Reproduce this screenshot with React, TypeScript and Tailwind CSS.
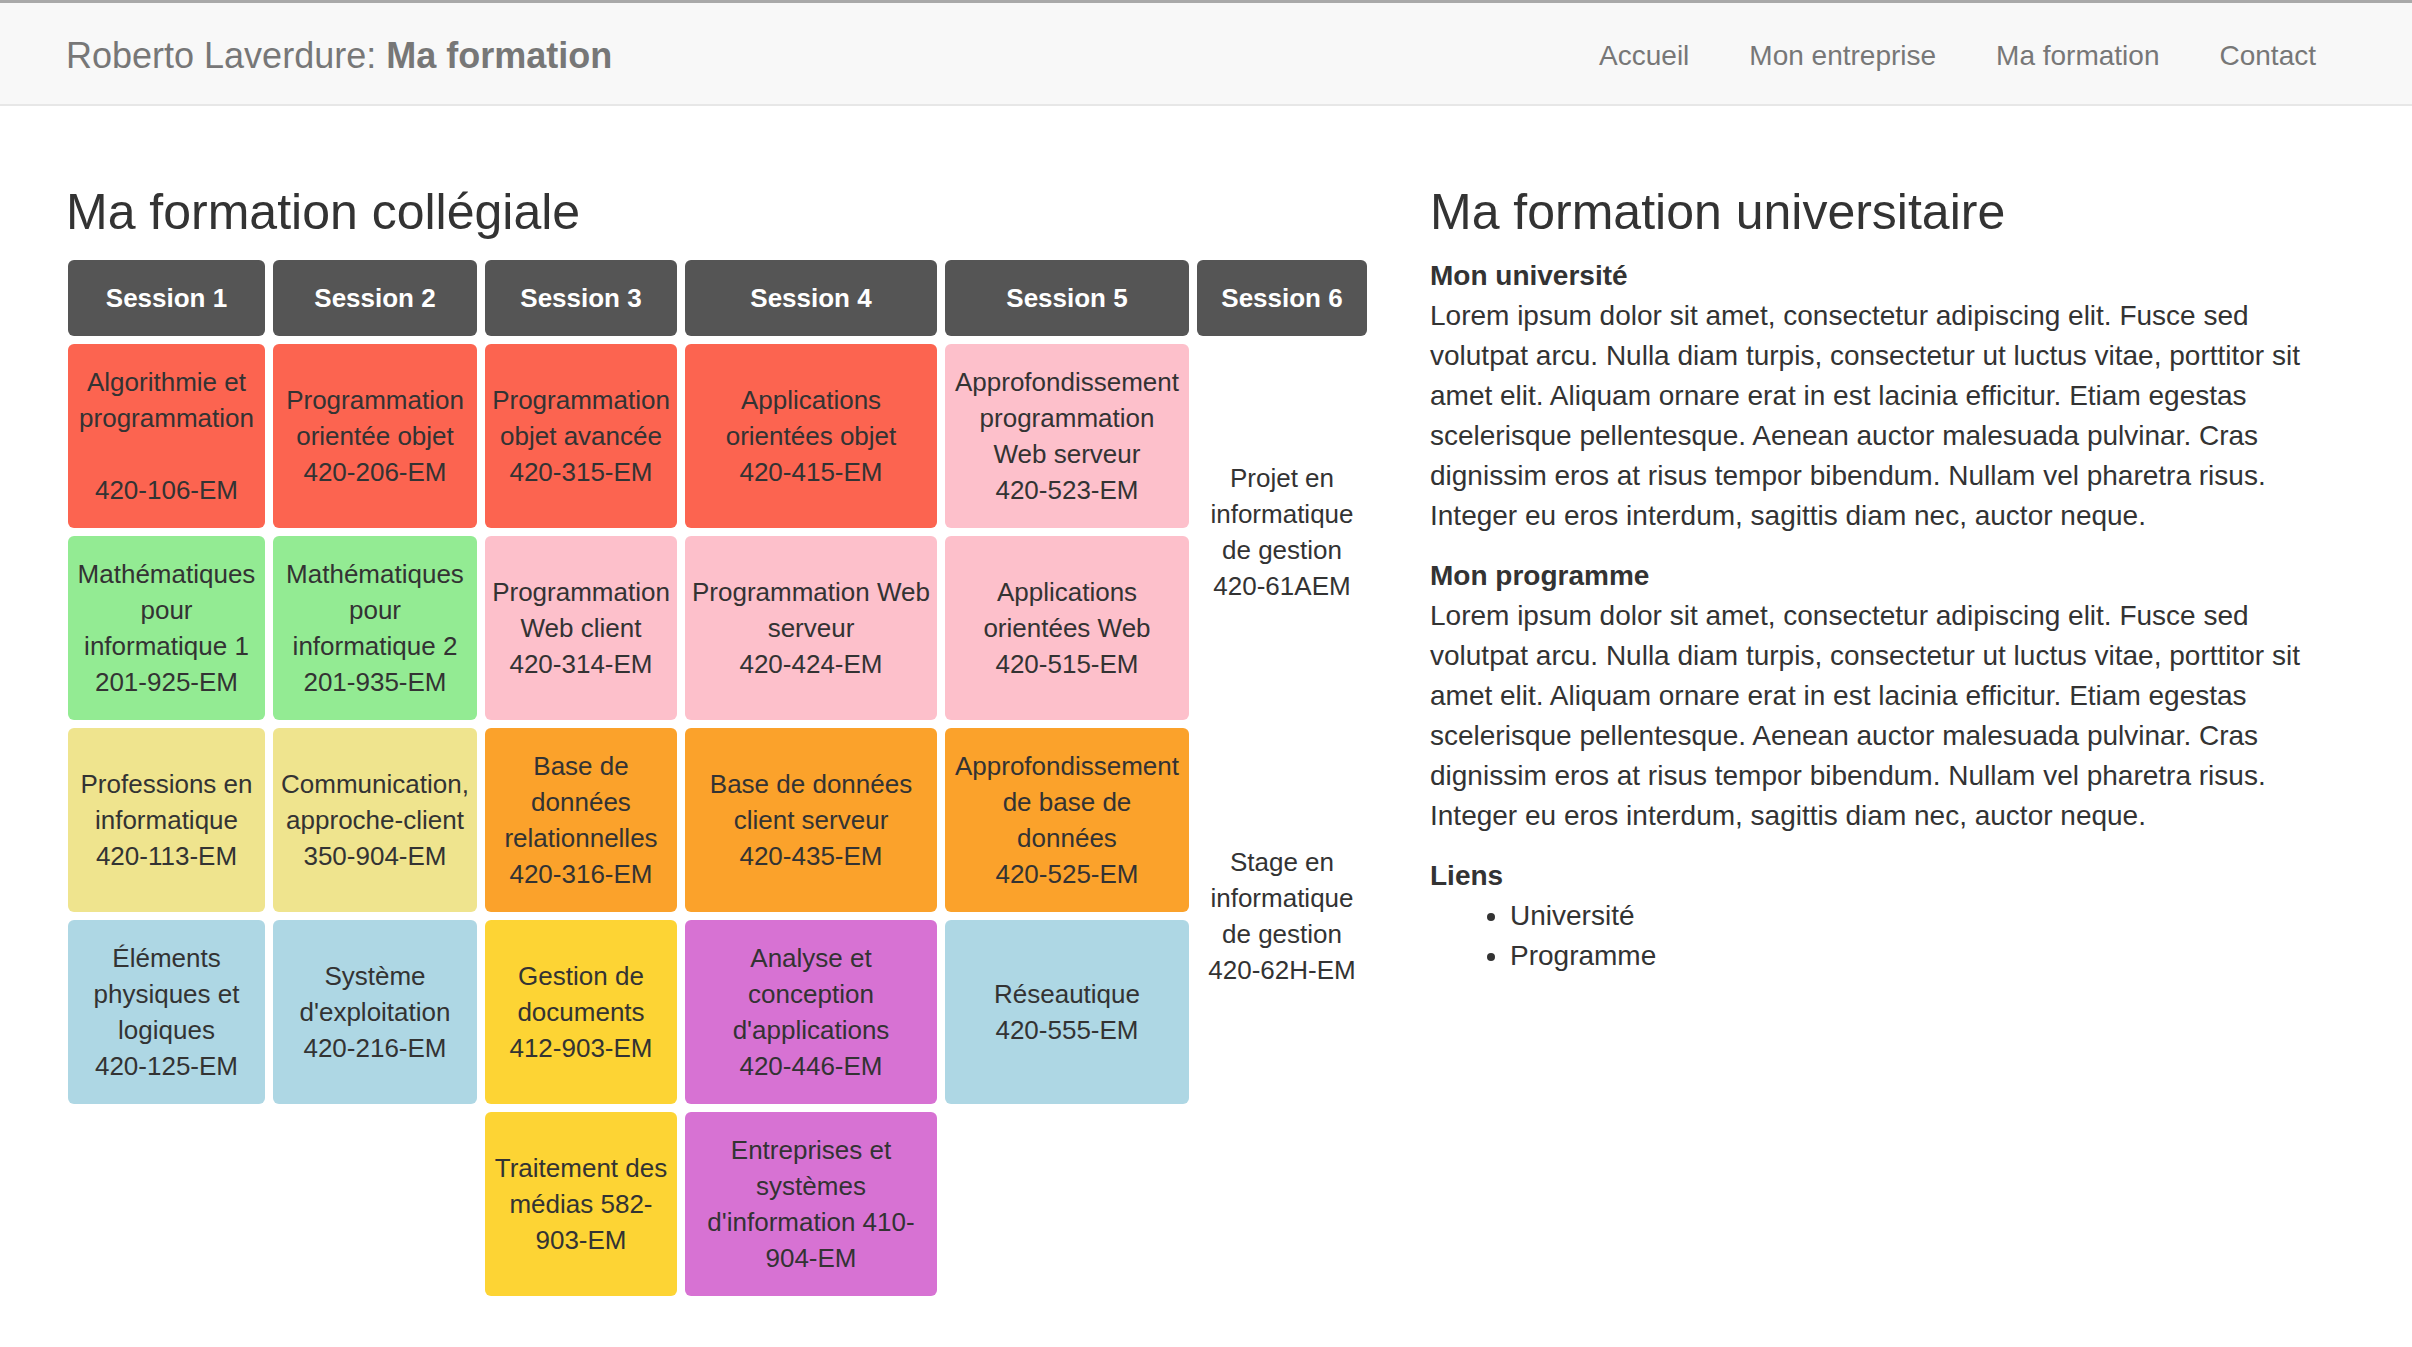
const navLinks = ['Accueil', 'Mon entreprise', 'Ma formation', 'Contact']

const sessions = ['Session 1', 'Session 2', 'Session 3', 'Session 4', 'Session 5', 'Session 6']

type Course = { lines: string[]; color: string }

// rows of the session grid, columns 1 to 5 (session 6 is laid out apart)
const rows: (Course | null)[][] = [
  [
    { lines: ['Algorithmie et', 'programmation', '\u00a0', '420-106-EM'], color: 'bg-[#fc6450]' },
    { lines: ['Programmation', 'orientée objet', '420-206-EM'], color: 'bg-[#fc6450]' },
    { lines: ['Programmation', 'objet avancée', '420-315-EM'], color: 'bg-[#fc6450]' },
    { lines: ['Applications', 'orientées objet', '420-415-EM'], color: 'bg-[#fc6450]' },
    { lines: ['Approfondissement', 'programmation', 'Web serveur', '420-523-EM'], color: 'bg-[#fdc0cb]' },
  ],
  [
    { lines: ['Mathématiques', 'pour', 'informatique 1', '201-925-EM'], color: 'bg-[#93eb93]' },
    { lines: ['Mathématiques', 'pour', 'informatique 2', '201-935-EM'], color: 'bg-[#93eb93]' },
    { lines: ['Programmation', 'Web client', '420-314-EM'], color: 'bg-[#fdc0cb]' },
    { lines: ['Programmation Web', 'serveur', '420-424-EM'], color: 'bg-[#fdc0cb]' },
    { lines: ['Applications', 'orientées Web', '420-515-EM'], color: 'bg-[#fdc0cb]' },
  ],
  [
    { lines: ['Professions en', 'informatique', '420-113-EM'], color: 'bg-[#efe48e]' },
    { lines: ['Communication,', 'approche-client', '350-904-EM'], color: 'bg-[#efe48e]' },
    { lines: ['Base de', 'données', 'relationnelles', '420-316-EM'], color: 'bg-[#fba22b]' },
    { lines: ['Base de données', 'client serveur', '420-435-EM'], color: 'bg-[#fba22b]' },
    { lines: ['Approfondissement', 'de base de', 'données', '420-525-EM'], color: 'bg-[#fba22b]' },
  ],
  [
    { lines: ['Éléments', 'physiques et', 'logiques', '420-125-EM'], color: 'bg-[#aed7e4]' },
    { lines: ['Système', "d'exploitation", '420-216-EM'], color: 'bg-[#aed7e4]' },
    { lines: ['Gestion de', 'documents', '412-903-EM'], color: 'bg-[#fdd434]' },
    { lines: ['Analyse et', 'conception', "d'applications", '420-446-EM'], color: 'bg-[#d772d3]' },
    { lines: ['Réseautique', '420-555-EM'], color: 'bg-[#aed7e4]' },
  ],
  [
    null,
    null,
    { lines: ['Traitement des', 'médias 582-', '903-EM'], color: 'bg-[#fdd434]' },
    { lines: ['Entreprises et', 'systèmes', "d'information 410-", '904-EM'], color: 'bg-[#d772d3]' },
    null,
  ],
]

const lorem =
  'Lorem ipsum dolor sit amet, consectetur adipiscing elit. Fusce sed volutpat arcu. Nulla diam turpis, consectetur ut luctus vitae, porttitor sit amet elit. Aliquam ornare erat in est lacinia efficitur. Etiam egestas scelerisque pellentesque. Aenean auctor malesuada pulvinar. Cras dignissim eros at risus tempor bibendum. Nullam vel pharetra risus. Integer eu eros interdum, sagittis diam nec, auctor neque.'

function Lines({ lines }: { lines: string[] }) {
  return (
    <div className="text-center">
      {lines.map((l, i) => (
        <div key={i} className="whitespace-nowrap">
          {l}
        </div>
      ))}
    </div>
  )
}

function SessionGrid() {
  return (
    <div className="ml-[2px] grid grid-cols-[197px_204px_192px_252px_244px_170px] grid-rows-[76px_184px_184px_184px_184px_184px] gap-[8px] text-[26px] leading-[36px] text-[#333]">
      {sessions.map((s) => (
        <div
          key={s}
          className="flex items-center justify-center rounded-[6px] bg-[#555] font-bold text-white"
        >
          {s}
        </div>
      ))}

      {rows.map((row, r) =>
        row.map((c, i) =>
          c ? (
            <div
              key={`${r}-${i}`}
              className={`flex items-center justify-center rounded-[6px] px-1 ${c.color}`}
              style={{ gridRow: r + 2, gridColumn: i + 1 }}
            >
              <Lines lines={c.lines} />
            </div>
          ) : (
            <div key={`${r}-${i}`} style={{ gridRow: r + 2, gridColumn: i + 1 }} />
          )
        )
      )}

      {/* Session 6 spans two rows each */}
      <div className="col-start-6 row-start-2 row-span-2 flex items-center justify-center">
        <Lines lines={['Projet en', 'informatique', 'de gestion', '420-61AEM']} />
      </div>
      <div className="col-start-6 row-start-4 row-span-2 flex items-center justify-center">
        <Lines lines={['Stage en', 'informatique', 'de gestion', '420-62H-EM']} />
      </div>
    </div>
  )
}

export default function App() {
  return (
    <div className="min-h-screen bg-white font-['Liberation_Sans',Arial,sans-serif] text-[#333]">
      <div className="h-[3px] bg-[#a9a9a9]" />

      {/* Navbar */}
      <nav className="h-[103px] border-b-2 border-[#e7e7e7] bg-[#f8f8f8]">
        <div className="mx-[66px] flex h-full items-center justify-between pt-[4px]">
          <div className="text-[36px] leading-[40px] text-[#777]">
            Roberto Laverdure: <span className="font-bold">Ma formation</span>
          </div>
          <ul className="flex text-[28px] leading-[40px] text-[#777]">
            {navLinks.map((l) => (
              <li key={l} className="px-[30px]">
                {l}
              </li>
            ))}
          </ul>
        </div>
      </nav>

      {/* Content */}
      <div className="mx-[66px] flex gap-[60px] pt-[79px]">
        <div className="w-[1304px]">
          <h3 className="mb-[20px] text-[50px] leading-[55px] font-normal">Ma formation collégiale</h3>
          <SessionGrid />
        </div>

        <div className="flex-1">
          <h3 className="mb-[16px] text-[50px] leading-[55px] font-normal">Ma formation universitaire</h3>
          <div className="text-[28px] leading-[40px]">
            <div className="mb-[20px] max-w-[900px]">
              <p className="font-bold">Mon université</p>
              <p>{lorem}</p>
            </div>
            <div className="mb-[20px] max-w-[900px]">
              <p className="font-bold">Mon programme</p>
              <p>{lorem}</p>
            </div>
            <p className="font-bold">Liens</p>
            <ul className="list-disc pl-[80px]">
              <li>Université</li>
              <li>Programme</li>
            </ul>
          </div>
        </div>
      </div>
    </div>
  )
}
